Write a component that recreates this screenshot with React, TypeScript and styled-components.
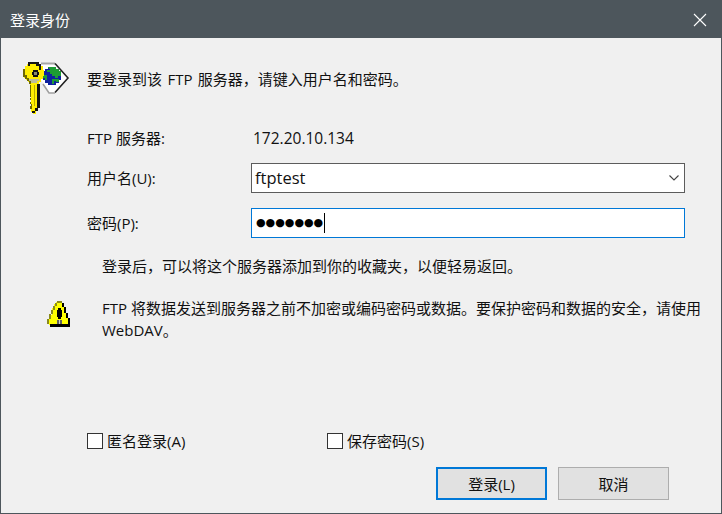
import React from "react";
import styled, { createGlobalStyle } from "styled-components";

const Global = createGlobalStyle`
  html, body { margin: 0; padding: 0; background: #f0f0f0; }
  * { box-sizing: border-box; }
`;

const Dialog = styled.div`
  width: 722px;
  height: 514px;
  display: flex;
  flex-direction: column;
  background: #f0f0f0;
  border: 1px solid #4d565c;
  color: #111;
  font-family: "Open Sans", "Noto Sans CJK SC", sans-serif;
  font-size: 15px;
  line-height: 20px;
`;

const TitleBar = styled.div`
  height: 37px;
  flex: none;
  background: #4d565c;
  color: #fff;
  display: flex;
  align-items: center;
  justify-content: space-between;
  padding: 0 14px 0 9px;
  font-size: 15px;
`;

const Body = styled.div`
  flex: 1;
  display: flex;
  flex-direction: column;
  padding: 22px 36px 13px 22px;
`;

const IntroRow = styled.div`
  display: flex;
  align-items: flex-start;
  height: 54px;
`;

const IntroIcon = styled.svg`
  width: 48px;
  height: 54px;
  flex: none;
  margin-right: 16px;
`;

const IntroText = styled.div`
  padding-top: 9px;
  word-spacing: 1.5px;
`;

const Form = styled.div`
  display: grid;
  grid-template-columns: 164px 434px;
  row-gap: 15px;
  margin: 14px 0 0 64px;
  align-items: center;
`;

const Label = styled.div``;

const ReadValue = styled.div`
  padding-left: 2px;
  font-size: 15.5px;
`;

const Field = styled.div<{ $focused?: boolean }>`
  height: 30px;
  display: flex;
  align-items: center;
  justify-content: space-between;
  background: #fff;
  border: 1px solid ${(p) => (p.$focused ? "#0078d7" : "#5c5c5c")};
  padding: 0 5px 0 ${(p) => (p.$focused ? 4 : 3)}px;
`;

const FieldText = styled.span`
  font-size: 16.5px;
`;

const Dots = styled.span`
  font-family: "DejaVu Sans", sans-serif;
  font-size: 11px;
  color: #000;
`;

const Caret = styled.span`
  display: inline-block;
  width: 1px;
  height: 20px;
  background: #000;
  margin-left: 1px;
`;

const Password = styled.div`
  display: flex;
  align-items: center;
`;

const Hint = styled.div`
  margin: 18px 0 0 79px;
`;

const WarnRow = styled.div`
  display: flex;
  margin-top: 21px;
`;

const WarnIcon = styled.svg`
  width: 26px;
  height: 26px;
  flex: none;
  margin: 4px 29px 0 24px;
`;

const WarnText = styled.div`
  width: 610px;
  margin-right: -30px;
  line-height: 22px;
`;

const Spacer = styled.div`
  flex: 1;
`;

const Checks = styled.div`
  display: flex;
  margin-left: 64px;
`;

const Check = styled.label`
  display: flex;
  align-items: center;
  width: 240px;
`;

const Box = styled.span`
  width: 16px;
  height: 16px;
  background: #fff;
  border: 1px solid #333;
  margin-right: 4px;
`;

const Buttons = styled.div`
  display: flex;
  justify-content: flex-end;
  gap: 11px;
  margin-top: 16px;
  margin-right: 16px;
`;

const Button = styled.button<{ $primary?: boolean }>`
  width: 111px;
  height: 33px;
  background: #e1e1e1;
  border: ${(p) => (p.$primary ? "2px solid #0078d7" : "1px solid #adadad")};
  color: #111;
  font: inherit;
  padding: 0;
`;

const KeyIcon = () => (
  <IntroIcon viewBox="0 0 48 54">
    {/* address tag */}
    <path d="M16 3.500H32L45 18 31 33H26L18 20Z" fill="#fff" />
    <path d="M18 3.500H32" fill="none" stroke="#a6a6a6" strokeWidth="2" />
    <path d="M32 3.500L45 18 32 32.500" fill="none" stroke="#222" strokeWidth="1.6" />
    <path d="M20 24L26 33H32" fill="none" stroke="#a0a0a0" strokeWidth="1.6" />
    {/* globe */}
    <g transform="translate(2.450 .25) scale(.9)" shapeRendering="crispEdges">
      <path d="M25 8h9v2h3v2h2v10h-2v3h-3v2h-9v-2h-3v-3h-2V12h2v-2h3z" fill="#10229e" />
      <path d="M25 8h9v2h3v2h2v5h-3v3h-3v-2h-3v-3h-3v-2h-3v-2h4zM21 16h3v6h-2v-2h-2v-3zM29 21h5v2h-2v3h-3zM34 21h3v3h-3z" fill="#1d9c34" />
    </g>
    {/* key */}
    <g transform="translate(0 2) scale(1 .96)" shapeRendering="crispEdges">
      <path d="M6 0h10v2h2v2h2v4h1v7h-1v3h-2v3h-2v3h-1v27h-2v3h-3v-2H8v-4H7v-2h1v-2H7v-2h1v-2H7v-2h1V24H7v-3H5v-2H3v-2H1v-3H0V7h2V4h2V2h2z" fill="#ffee00" />
      <path d="M5 0h11v2h2v6h-2V4h-3V2H7v2H5z" fill="#161616" />
      <path d="M0 7h2v7h2v3h2v3h2v3H6v-3H4v-2H2v-2H0zM7 24h1v20h1v5H7v-3h1v-2H7v-2h1v-2H7v-2h1v-2H7z" fill="#6e6a00" />
      <path d="M14 23h3v25h-2v3h-3v2h-3v-2h3v-3h2z" fill="#111" />
      <path d="M11 24h1v22h-1z" fill="#b8ac00" />
      <path d="M10 8h5v2h1v4h-1v2h-5v-2H9v-4h1z" fill="#111" />
      <path d="M11 10h3v4h-3z" fill="#8c8c6c" />
      <path d="M6 18h10v2h-2v2H8v-2H6z" fill="#bdbd9c" />
    </g>
  </IntroIcon>
);

const WarningIcon = () => (
  <WarnIcon viewBox="0 0 26 26" shapeRendering="crispEdges">
    <path d="M10 0h5v3h2v4h2v5h2v5h2v7H2v-6h1v-4h2V7h2V3h2V1h1z" fill="#ffff00" />
    <path d="M10 0h5v2h-5zM8 2h2v3H8zM6 5h2v4H6zM4 9h2v4H4zM2 13h2v5H2zM0 18h2v5H0z" fill="#8a8a1e" />
    <path d="M15 2h2v4h-2zM17 6h2v6h-2zM19 12h2v5h-2zM21 17h2v6h-2zM3 23h20v3H3z" fill="#000" />
    <path d="M11 7h3v2h1v7h-1v2h-3v-2h-1V9h1z" fill="#000" />
    <path d="M10 19h5v4h-5z" fill="#606060" />
    <path d="M12 19h1v4h-1z" fill="#d0d0d0" />
  </WarnIcon>
);

export default function App() {
  return (
    <>
      <Global />
      <Dialog>
        <TitleBar>
          <span>登录身份</span>
          <svg width="14" height="14" viewBox="0 0 14 14">
            <path d="M1 1l12 12M13 1L1 13" stroke="#fff" strokeWidth="1.1" />
          </svg>
        </TitleBar>
        <Body>
          <IntroRow>
            <KeyIcon />
            <IntroText>要登录到该 FTP 服务器，请键入用户名和密码。</IntroText>
          </IntroRow>
          <Form>
            <Label>FTP 服务器:</Label>
            <ReadValue>172.20.10.134</ReadValue>
            <Label>用户名(U):</Label>
            <Field>
              <FieldText>ftptest</FieldText>
              <svg width="10" height="6" viewBox="0 0 10 6">
                <path d="M.5.5L5 5 9.500.5" fill="none" stroke="#444" strokeWidth="1.1" />
              </svg>
            </Field>
            <Label>密码(P):</Label>
            <Field $focused>
              <Password>
                <Dots>●●●●●●●</Dots>
                <Caret />
              </Password>
            </Field>
          </Form>
          <Hint>登录后，可以将这个服务器添加到你的收藏夹，以便轻易返回。</Hint>
          <WarnRow>
            <WarningIcon />
            <WarnText>
              FTP 将数据发送到服务器之前不加密或编码密码或数据。要保护密码和数据的安全，请使用 WebDAV。
            </WarnText>
          </WarnRow>
          <Spacer />
          <Checks>
            <Check>
              <Box />
              匿名登录(A)
            </Check>
            <Check>
              <Box />
              保存密码(S)
            </Check>
          </Checks>
          <Buttons>
            <Button $primary>登录(L)</Button>
            <Button>取消</Button>
          </Buttons>
        </Body>
      </Dialog>
    </>
  );
}
